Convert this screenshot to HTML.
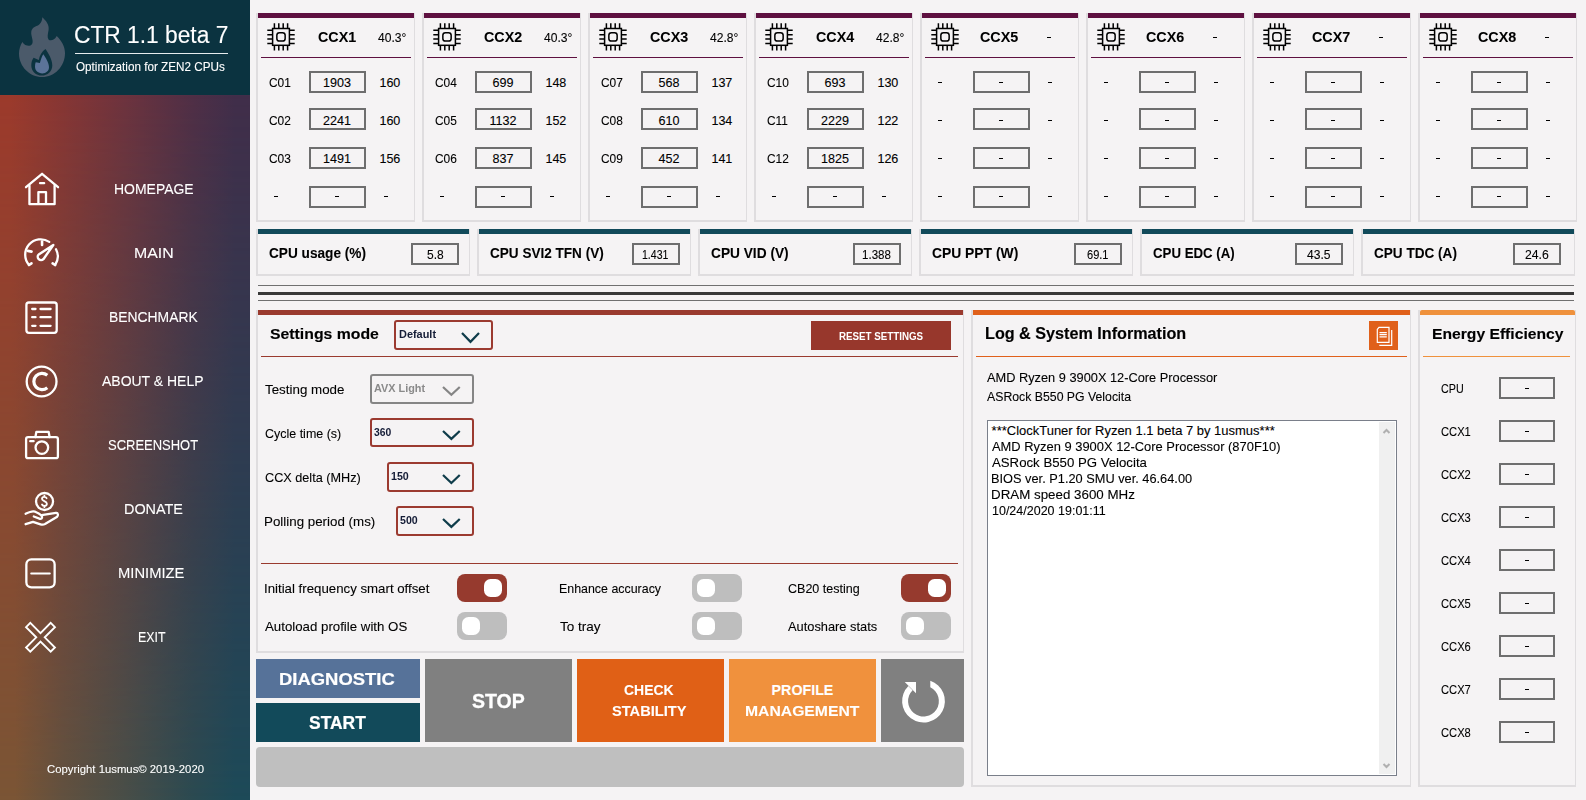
<!DOCTYPE html>
<html><head><meta charset="utf-8"><style>
html,body{margin:0;padding:0;width:1586px;height:800px;overflow:hidden;background:#f5f3f4;}
body>div,body>span,body>svg{position:absolute;box-sizing:content-box;}
span{white-space:nowrap;font-family:"Liberation Sans",sans-serif;transform-origin:0 0;}
svg{overflow:visible;}
</style></head><body>
<div style="left:0px;top:0px;width:250px;height:95px;background:#0b3340;"></div>
<div style="left:0;top:95px;width:250px;height:705px;background:linear-gradient(to right,#9c3a2c 4%,#873634 25%,#6d333e 50%,#502f46 77%,#412e4a 94%)"></div>
<div style="left:0;top:95px;width:250px;height:705px;background:linear-gradient(to right,#7a5535 6%,#61513f 25%,#484e48 50%,#2b4a51 77%,#1d4a58 94%);-webkit-mask-image:linear-gradient(to bottom,transparent,#000);mask-image:linear-gradient(to bottom,transparent,#000)"></div>
<div style="left:75px;top:52.8px;width:153px;height:1.4px;background:#e6ecee;"></div>
<svg style="left:0;top:0" width="250" height="800" viewBox="0 0 250 800">
<path fill="#4b5a6a" d="M42.2,17.3 C46,20.5 49.5,25 48.6,30 C47.9,34 47,37 48.5,39.4 C50.5,41.3 54.5,40.2 56.7,35.9 C61.5,40.5 65,46.5 65,53 C65,66.5 54.5,77.1 42.2,77.1 C29.5,77.1 19,66.5 19,53.6 C19,49.5 20.3,45.2 22.4,42 C24,45 27,46 29.4,45.8 C32,45.5 33,43 32.5,40 C32,37 30.8,34 31.3,31.5 C32,28 35,26.6 37.3,25.8 C40,24.5 42.5,21 42.2,17.3 Z"/>
<path fill="#0b3340" d="M45.5,49.1 C48,53 52.3,59 52.3,65.5 C52.3,71.3 47.5,75.6 41.8,75.6 C36,75.6 31.3,71.3 31.3,65.5 C31.3,62.5 32,60 33.6,57.8 L38.8,60 C39.5,55.5 42,51.5 45.5,49.1 Z"/>
<path fill="#5b7399" d="M43.3,54.2 C45.5,57.5 49,62.5 49,67.3 C49,70.8 46.2,73.4 42.3,73.4 C38.2,73.4 35,70.6 35,66.8 C35,65 35.2,63.5 35.7,62.2 L39.9,62.9 C40.8,59.5 41.8,56.5 43.3,54.2 Z"/>
<g stroke="#fff" fill="none" stroke-width="2.3" stroke-linecap="round" stroke-linejoin="round">
<path d="M26,187.2 L42.05,173.8 L58.06,187.2"/>
<path d="M29.45,185.6 V204.2 H54.6 V185.6"/>
<path d="M38.4,204.2 V192.1 H46 V204.2" stroke-linecap="butt"/>
<path d="M40,183.2 H44.2" stroke-width="2.2"/>
</g>
<g stroke="#fff" fill="none" stroke-width="2.3" stroke-linecap="round" stroke-linejoin="round" stroke-width="2.9">
<path d="M29,265 A15.5,15.5 0 0 1 49.25,241.9"/>
<path d="M56,249.3 A15.5,15.5 0 0 1 55.1,265"/>
<path d="M42.05,241.5 V245" stroke-width="2.6"/>
<path d="M27.8,250.9 L31.6,251.6" stroke-width="2.6"/>
<path d="M29,265 L31.5,263.3" stroke-width="2.6"/>
<path d="M55.1,265 L52.6,263.4" stroke-width="2.6"/>
<path d="M53.3,245 L43.4,259.2 A3.3,3.3 0 0 1 38.7,254.5 Z" stroke-width="2.4"/>
</g>
<g stroke="#fff" fill="none" stroke-width="2.3" stroke-linecap="round" stroke-linejoin="round" stroke-width="2.4">
<rect x="26.4" y="302.5" width="30.3" height="30.3" rx="2.5"/>
<path d="M32.2,309 H35.5 M40.5,309 H50.6 M32.2,317.2 H35.5 M40.5,317.2 H50.6 M32.2,325.8 H35.5 M40.5,325.8 H50.6"/>
</g>
<g stroke="#fff" fill="none" stroke-width="2.3" stroke-linecap="round" stroke-linejoin="round" stroke-width="3">
<circle cx="41.6" cy="381.5" r="14.9"/>
<path d="M47.3,375.2 A8.2,8.2 0 1 0 47.3,387.8" stroke-width="3.2" stroke-linecap="butt"/>
</g>
<g stroke="#fff" fill="none" stroke-width="2.3" stroke-linecap="round" stroke-linejoin="round" stroke-width="2.1">
<rect x="26.1" y="437.1" width="31.8" height="21.1" rx="2"/>
<path d="M35.4,437 L36.4,431.8 H48.6 L49.6,437"/>
<circle cx="41.85" cy="447.6" r="6.3"/>
<path d="M30.2,441.2 H33.6"/>
</g>
<g stroke="#fff" fill="none" stroke-width="2.3" stroke-linecap="round" stroke-linejoin="round" stroke-width="2">
<circle cx="44.55" cy="501.5" r="8.5"/>
<path d="M46.6,498.2 C46,497 44.8,496.9 44.2,496.9 C42.8,496.9 42,497.9 42,499 C42,501.3 46.9,501 46.9,503.7 C46.9,505 45.9,505.9 44.4,505.9 C43.3,505.9 42.4,505.3 42,504.5 M44.4,495.6 V496.9 M44.4,505.9 V507.2" stroke-width="1.8"/>
<path d="M25.6,513.8 C28,512.6 31,511.1 33.5,511.3 C36,511.5 39,513.6 41,515.1 C42.9,516.6 42.2,519.2 40,518.9 L33.8,516.5"/>
<path d="M41.6,515.2 L56,512.8 C58.2,512.6 58.6,515.6 56.8,517.1 L45,524 C43.5,524.8 42,524.8 40.5,524.3 L33,521.8 L25.6,524.2"/>
</g>
<g stroke="#fff" fill="none" stroke-width="2.3" stroke-linecap="round" stroke-linejoin="round" stroke-width="2.3">
<rect x="26.35" y="559.45" width="28.3" height="27.9" rx="5"/>
<path d="M31.2,573.4 H49.8" stroke-width="2"/>
</g>
<polygon fill="none" stroke="#fff" stroke-width="1.9" stroke-linejoin="miter" points="30.32,622.93 40.50,633.11 50.68,622.93 54.92,627.17 44.74,637.35 54.92,647.53 50.68,651.77 40.50,641.59 30.32,651.77 26.08,647.53 36.26,637.35 26.08,627.17"/>
</svg>
<div style="left:256px;top:13px;width:156px;height:207px;border-left:2px solid #dfdddf;border-right:1px solid #dfdddf;border-bottom:2px solid #dfdddf"></div>
<div style="left:258px;top:13px;width:156px;height:5px;background:#5e1040;"></div>
<div style="left:261px;top:57px;width:150px;height:1px;background:#5e1040;"></div>
<svg style="left:267px;top:23px" width="28" height="28" viewBox="0 0 28 28"><g fill="none" stroke="#000" stroke-width="1.5">
<rect x="5.6" y="5.5" width="16.8" height="16.8"/><rect x="9.85" y="9.75" width="8.3" height="8.3" rx="2.6"/>
<path d="M11.8,0.3V5.5M16.2,0.3V5.5M7.4,0.3V5.5M20.6,0.3V5.5 M11.8,22.3V27.6M16.2,22.3V27.6M7.4,22.3V27.6M20.6,22.3V27.6 M0.3,11.7H5.6M0.3,16.1H5.6M0.3,7.3H5.6M0.3,20.5H5.6 M22.4,11.7H27.7M22.4,16.1H27.7M22.4,7.3H27.7M22.4,20.5H27.7"/></g></svg>
<div style="left:309px;top:71px;width:53px;height:18px;border:2px solid #6e6e6e;background:transparent;border-radius:0px;"></div>
<div style="left:309px;top:108px;width:53px;height:18px;border:2px solid #6e6e6e;background:transparent;border-radius:0px;"></div>
<div style="left:309px;top:147px;width:53px;height:18px;border:2px solid #6e6e6e;background:transparent;border-radius:0px;"></div>
<div style="left:309px;top:186px;width:53px;height:18px;border:2px solid #6e6e6e;background:transparent;border-radius:0px;"></div>
<div style="left:274px;top:196px;width:4px;height:1px;background:#000;"></div>
<div style="left:335px;top:196px;width:4px;height:1px;background:#000;"></div>
<div style="left:384px;top:196px;width:4px;height:1px;background:#000;"></div>
<div style="left:422px;top:13px;width:156px;height:207px;border-left:2px solid #dfdddf;border-right:1px solid #dfdddf;border-bottom:2px solid #dfdddf"></div>
<div style="left:424px;top:13px;width:156px;height:5px;background:#5e1040;"></div>
<div style="left:427px;top:57px;width:150px;height:1px;background:#5e1040;"></div>
<svg style="left:433px;top:23px" width="28" height="28" viewBox="0 0 28 28"><g fill="none" stroke="#000" stroke-width="1.5">
<rect x="5.6" y="5.5" width="16.8" height="16.8"/><rect x="9.85" y="9.75" width="8.3" height="8.3" rx="2.6"/>
<path d="M11.8,0.3V5.5M16.2,0.3V5.5M7.4,0.3V5.5M20.6,0.3V5.5 M11.8,22.3V27.6M16.2,22.3V27.6M7.4,22.3V27.6M20.6,22.3V27.6 M0.3,11.7H5.6M0.3,16.1H5.6M0.3,7.3H5.6M0.3,20.5H5.6 M22.4,11.7H27.7M22.4,16.1H27.7M22.4,7.3H27.7M22.4,20.5H27.7"/></g></svg>
<div style="left:475px;top:71px;width:53px;height:18px;border:2px solid #6e6e6e;background:transparent;border-radius:0px;"></div>
<div style="left:475px;top:108px;width:53px;height:18px;border:2px solid #6e6e6e;background:transparent;border-radius:0px;"></div>
<div style="left:475px;top:147px;width:53px;height:18px;border:2px solid #6e6e6e;background:transparent;border-radius:0px;"></div>
<div style="left:475px;top:186px;width:53px;height:18px;border:2px solid #6e6e6e;background:transparent;border-radius:0px;"></div>
<div style="left:440px;top:196px;width:4px;height:1px;background:#000;"></div>
<div style="left:501px;top:196px;width:4px;height:1px;background:#000;"></div>
<div style="left:550px;top:196px;width:4px;height:1px;background:#000;"></div>
<div style="left:588px;top:13px;width:156px;height:207px;border-left:2px solid #dfdddf;border-right:1px solid #dfdddf;border-bottom:2px solid #dfdddf"></div>
<div style="left:590px;top:13px;width:156px;height:5px;background:#5e1040;"></div>
<div style="left:593px;top:57px;width:150px;height:1px;background:#5e1040;"></div>
<svg style="left:599px;top:23px" width="28" height="28" viewBox="0 0 28 28"><g fill="none" stroke="#000" stroke-width="1.5">
<rect x="5.6" y="5.5" width="16.8" height="16.8"/><rect x="9.85" y="9.75" width="8.3" height="8.3" rx="2.6"/>
<path d="M11.8,0.3V5.5M16.2,0.3V5.5M7.4,0.3V5.5M20.6,0.3V5.5 M11.8,22.3V27.6M16.2,22.3V27.6M7.4,22.3V27.6M20.6,22.3V27.6 M0.3,11.7H5.6M0.3,16.1H5.6M0.3,7.3H5.6M0.3,20.5H5.6 M22.4,11.7H27.7M22.4,16.1H27.7M22.4,7.3H27.7M22.4,20.5H27.7"/></g></svg>
<div style="left:641px;top:71px;width:53px;height:18px;border:2px solid #6e6e6e;background:transparent;border-radius:0px;"></div>
<div style="left:641px;top:108px;width:53px;height:18px;border:2px solid #6e6e6e;background:transparent;border-radius:0px;"></div>
<div style="left:641px;top:147px;width:53px;height:18px;border:2px solid #6e6e6e;background:transparent;border-radius:0px;"></div>
<div style="left:641px;top:186px;width:53px;height:18px;border:2px solid #6e6e6e;background:transparent;border-radius:0px;"></div>
<div style="left:606px;top:196px;width:4px;height:1px;background:#000;"></div>
<div style="left:667px;top:196px;width:4px;height:1px;background:#000;"></div>
<div style="left:716px;top:196px;width:4px;height:1px;background:#000;"></div>
<div style="left:754px;top:13px;width:156px;height:207px;border-left:2px solid #dfdddf;border-right:1px solid #dfdddf;border-bottom:2px solid #dfdddf"></div>
<div style="left:756px;top:13px;width:156px;height:5px;background:#5e1040;"></div>
<div style="left:759px;top:57px;width:150px;height:1px;background:#5e1040;"></div>
<svg style="left:765px;top:23px" width="28" height="28" viewBox="0 0 28 28"><g fill="none" stroke="#000" stroke-width="1.5">
<rect x="5.6" y="5.5" width="16.8" height="16.8"/><rect x="9.85" y="9.75" width="8.3" height="8.3" rx="2.6"/>
<path d="M11.8,0.3V5.5M16.2,0.3V5.5M7.4,0.3V5.5M20.6,0.3V5.5 M11.8,22.3V27.6M16.2,22.3V27.6M7.4,22.3V27.6M20.6,22.3V27.6 M0.3,11.7H5.6M0.3,16.1H5.6M0.3,7.3H5.6M0.3,20.5H5.6 M22.4,11.7H27.7M22.4,16.1H27.7M22.4,7.3H27.7M22.4,20.5H27.7"/></g></svg>
<div style="left:807px;top:71px;width:53px;height:18px;border:2px solid #6e6e6e;background:transparent;border-radius:0px;"></div>
<div style="left:807px;top:108px;width:53px;height:18px;border:2px solid #6e6e6e;background:transparent;border-radius:0px;"></div>
<div style="left:807px;top:147px;width:53px;height:18px;border:2px solid #6e6e6e;background:transparent;border-radius:0px;"></div>
<div style="left:807px;top:186px;width:53px;height:18px;border:2px solid #6e6e6e;background:transparent;border-radius:0px;"></div>
<div style="left:772px;top:196px;width:4px;height:1px;background:#000;"></div>
<div style="left:833px;top:196px;width:4px;height:1px;background:#000;"></div>
<div style="left:882px;top:196px;width:4px;height:1px;background:#000;"></div>
<div style="left:920px;top:13px;width:156px;height:207px;border-left:2px solid #dfdddf;border-right:1px solid #dfdddf;border-bottom:2px solid #dfdddf"></div>
<div style="left:922px;top:13px;width:156px;height:5px;background:#5e1040;"></div>
<div style="left:925px;top:57px;width:150px;height:1px;background:#5e1040;"></div>
<svg style="left:931px;top:23px" width="28" height="28" viewBox="0 0 28 28"><g fill="none" stroke="#000" stroke-width="1.5">
<rect x="5.6" y="5.5" width="16.8" height="16.8"/><rect x="9.85" y="9.75" width="8.3" height="8.3" rx="2.6"/>
<path d="M11.8,0.3V5.5M16.2,0.3V5.5M7.4,0.3V5.5M20.6,0.3V5.5 M11.8,22.3V27.6M16.2,22.3V27.6M7.4,22.3V27.6M20.6,22.3V27.6 M0.3,11.7H5.6M0.3,16.1H5.6M0.3,7.3H5.6M0.3,20.5H5.6 M22.4,11.7H27.7M22.4,16.1H27.7M22.4,7.3H27.7M22.4,20.5H27.7"/></g></svg>
<div style="left:1047px;top:37px;width:4px;height:1px;background:#000;"></div>
<div style="left:973px;top:71px;width:53px;height:18px;border:2px solid #6e6e6e;background:transparent;border-radius:0px;"></div>
<div style="left:938px;top:82px;width:4px;height:1px;background:#000;"></div>
<div style="left:999px;top:82px;width:4px;height:1px;background:#000;"></div>
<div style="left:1048px;top:82px;width:4px;height:1px;background:#000;"></div>
<div style="left:973px;top:108px;width:53px;height:18px;border:2px solid #6e6e6e;background:transparent;border-radius:0px;"></div>
<div style="left:938px;top:120px;width:4px;height:1px;background:#000;"></div>
<div style="left:999px;top:120px;width:4px;height:1px;background:#000;"></div>
<div style="left:1048px;top:120px;width:4px;height:1px;background:#000;"></div>
<div style="left:973px;top:147px;width:53px;height:18px;border:2px solid #6e6e6e;background:transparent;border-radius:0px;"></div>
<div style="left:938px;top:158px;width:4px;height:1px;background:#000;"></div>
<div style="left:999px;top:158px;width:4px;height:1px;background:#000;"></div>
<div style="left:1048px;top:158px;width:4px;height:1px;background:#000;"></div>
<div style="left:973px;top:186px;width:53px;height:18px;border:2px solid #6e6e6e;background:transparent;border-radius:0px;"></div>
<div style="left:938px;top:196px;width:4px;height:1px;background:#000;"></div>
<div style="left:999px;top:196px;width:4px;height:1px;background:#000;"></div>
<div style="left:1048px;top:196px;width:4px;height:1px;background:#000;"></div>
<div style="left:1086px;top:13px;width:156px;height:207px;border-left:2px solid #dfdddf;border-right:1px solid #dfdddf;border-bottom:2px solid #dfdddf"></div>
<div style="left:1088px;top:13px;width:156px;height:5px;background:#5e1040;"></div>
<div style="left:1091px;top:57px;width:150px;height:1px;background:#5e1040;"></div>
<svg style="left:1097px;top:23px" width="28" height="28" viewBox="0 0 28 28"><g fill="none" stroke="#000" stroke-width="1.5">
<rect x="5.6" y="5.5" width="16.8" height="16.8"/><rect x="9.85" y="9.75" width="8.3" height="8.3" rx="2.6"/>
<path d="M11.8,0.3V5.5M16.2,0.3V5.5M7.4,0.3V5.5M20.6,0.3V5.5 M11.8,22.3V27.6M16.2,22.3V27.6M7.4,22.3V27.6M20.6,22.3V27.6 M0.3,11.7H5.6M0.3,16.1H5.6M0.3,7.3H5.6M0.3,20.5H5.6 M22.4,11.7H27.7M22.4,16.1H27.7M22.4,7.3H27.7M22.4,20.5H27.7"/></g></svg>
<div style="left:1213px;top:37px;width:4px;height:1px;background:#000;"></div>
<div style="left:1139px;top:71px;width:53px;height:18px;border:2px solid #6e6e6e;background:transparent;border-radius:0px;"></div>
<div style="left:1104px;top:82px;width:4px;height:1px;background:#000;"></div>
<div style="left:1165px;top:82px;width:4px;height:1px;background:#000;"></div>
<div style="left:1214px;top:82px;width:4px;height:1px;background:#000;"></div>
<div style="left:1139px;top:108px;width:53px;height:18px;border:2px solid #6e6e6e;background:transparent;border-radius:0px;"></div>
<div style="left:1104px;top:120px;width:4px;height:1px;background:#000;"></div>
<div style="left:1165px;top:120px;width:4px;height:1px;background:#000;"></div>
<div style="left:1214px;top:120px;width:4px;height:1px;background:#000;"></div>
<div style="left:1139px;top:147px;width:53px;height:18px;border:2px solid #6e6e6e;background:transparent;border-radius:0px;"></div>
<div style="left:1104px;top:158px;width:4px;height:1px;background:#000;"></div>
<div style="left:1165px;top:158px;width:4px;height:1px;background:#000;"></div>
<div style="left:1214px;top:158px;width:4px;height:1px;background:#000;"></div>
<div style="left:1139px;top:186px;width:53px;height:18px;border:2px solid #6e6e6e;background:transparent;border-radius:0px;"></div>
<div style="left:1104px;top:196px;width:4px;height:1px;background:#000;"></div>
<div style="left:1165px;top:196px;width:4px;height:1px;background:#000;"></div>
<div style="left:1214px;top:196px;width:4px;height:1px;background:#000;"></div>
<div style="left:1252px;top:13px;width:156px;height:207px;border-left:2px solid #dfdddf;border-right:1px solid #dfdddf;border-bottom:2px solid #dfdddf"></div>
<div style="left:1254px;top:13px;width:156px;height:5px;background:#5e1040;"></div>
<div style="left:1257px;top:57px;width:150px;height:1px;background:#5e1040;"></div>
<svg style="left:1263px;top:23px" width="28" height="28" viewBox="0 0 28 28"><g fill="none" stroke="#000" stroke-width="1.5">
<rect x="5.6" y="5.5" width="16.8" height="16.8"/><rect x="9.85" y="9.75" width="8.3" height="8.3" rx="2.6"/>
<path d="M11.8,0.3V5.5M16.2,0.3V5.5M7.4,0.3V5.5M20.6,0.3V5.5 M11.8,22.3V27.6M16.2,22.3V27.6M7.4,22.3V27.6M20.6,22.3V27.6 M0.3,11.7H5.6M0.3,16.1H5.6M0.3,7.3H5.6M0.3,20.5H5.6 M22.4,11.7H27.7M22.4,16.1H27.7M22.4,7.3H27.7M22.4,20.5H27.7"/></g></svg>
<div style="left:1379px;top:37px;width:4px;height:1px;background:#000;"></div>
<div style="left:1305px;top:71px;width:53px;height:18px;border:2px solid #6e6e6e;background:transparent;border-radius:0px;"></div>
<div style="left:1270px;top:82px;width:4px;height:1px;background:#000;"></div>
<div style="left:1331px;top:82px;width:4px;height:1px;background:#000;"></div>
<div style="left:1380px;top:82px;width:4px;height:1px;background:#000;"></div>
<div style="left:1305px;top:108px;width:53px;height:18px;border:2px solid #6e6e6e;background:transparent;border-radius:0px;"></div>
<div style="left:1270px;top:120px;width:4px;height:1px;background:#000;"></div>
<div style="left:1331px;top:120px;width:4px;height:1px;background:#000;"></div>
<div style="left:1380px;top:120px;width:4px;height:1px;background:#000;"></div>
<div style="left:1305px;top:147px;width:53px;height:18px;border:2px solid #6e6e6e;background:transparent;border-radius:0px;"></div>
<div style="left:1270px;top:158px;width:4px;height:1px;background:#000;"></div>
<div style="left:1331px;top:158px;width:4px;height:1px;background:#000;"></div>
<div style="left:1380px;top:158px;width:4px;height:1px;background:#000;"></div>
<div style="left:1305px;top:186px;width:53px;height:18px;border:2px solid #6e6e6e;background:transparent;border-radius:0px;"></div>
<div style="left:1270px;top:196px;width:4px;height:1px;background:#000;"></div>
<div style="left:1331px;top:196px;width:4px;height:1px;background:#000;"></div>
<div style="left:1380px;top:196px;width:4px;height:1px;background:#000;"></div>
<div style="left:1418px;top:13px;width:156px;height:207px;border-left:2px solid #dfdddf;border-right:1px solid #dfdddf;border-bottom:2px solid #dfdddf"></div>
<div style="left:1420px;top:13px;width:156px;height:5px;background:#5e1040;"></div>
<div style="left:1423px;top:57px;width:150px;height:1px;background:#5e1040;"></div>
<svg style="left:1429px;top:23px" width="28" height="28" viewBox="0 0 28 28"><g fill="none" stroke="#000" stroke-width="1.5">
<rect x="5.6" y="5.5" width="16.8" height="16.8"/><rect x="9.85" y="9.75" width="8.3" height="8.3" rx="2.6"/>
<path d="M11.8,0.3V5.5M16.2,0.3V5.5M7.4,0.3V5.5M20.6,0.3V5.5 M11.8,22.3V27.6M16.2,22.3V27.6M7.4,22.3V27.6M20.6,22.3V27.6 M0.3,11.7H5.6M0.3,16.1H5.6M0.3,7.3H5.6M0.3,20.5H5.6 M22.4,11.7H27.7M22.4,16.1H27.7M22.4,7.3H27.7M22.4,20.5H27.7"/></g></svg>
<div style="left:1545px;top:37px;width:4px;height:1px;background:#000;"></div>
<div style="left:1471px;top:71px;width:53px;height:18px;border:2px solid #6e6e6e;background:transparent;border-radius:0px;"></div>
<div style="left:1436px;top:82px;width:4px;height:1px;background:#000;"></div>
<div style="left:1497px;top:82px;width:4px;height:1px;background:#000;"></div>
<div style="left:1546px;top:82px;width:4px;height:1px;background:#000;"></div>
<div style="left:1471px;top:108px;width:53px;height:18px;border:2px solid #6e6e6e;background:transparent;border-radius:0px;"></div>
<div style="left:1436px;top:120px;width:4px;height:1px;background:#000;"></div>
<div style="left:1497px;top:120px;width:4px;height:1px;background:#000;"></div>
<div style="left:1546px;top:120px;width:4px;height:1px;background:#000;"></div>
<div style="left:1471px;top:147px;width:53px;height:18px;border:2px solid #6e6e6e;background:transparent;border-radius:0px;"></div>
<div style="left:1436px;top:158px;width:4px;height:1px;background:#000;"></div>
<div style="left:1497px;top:158px;width:4px;height:1px;background:#000;"></div>
<div style="left:1546px;top:158px;width:4px;height:1px;background:#000;"></div>
<div style="left:1471px;top:186px;width:53px;height:18px;border:2px solid #6e6e6e;background:transparent;border-radius:0px;"></div>
<div style="left:1436px;top:196px;width:4px;height:1px;background:#000;"></div>
<div style="left:1497px;top:196px;width:4px;height:1px;background:#000;"></div>
<div style="left:1546px;top:196px;width:4px;height:1px;background:#000;"></div>
<div style="left:256px;top:229px;width:211px;height:45px;border-left:2px solid #dfdddf;border-right:1px solid #dfdddf;border-bottom:2px solid #dfdddf"></div>
<div style="left:258px;top:229px;width:211px;height:5px;background:#114a5a;"></div>
<div style="left:411px;top:243px;width:44px;height:18px;border:2px solid #6e6e6e;background:transparent;border-radius:0px;"></div>
<div style="left:477px;top:229px;width:211px;height:45px;border-left:2px solid #dfdddf;border-right:1px solid #dfdddf;border-bottom:2px solid #dfdddf"></div>
<div style="left:479px;top:229px;width:211px;height:5px;background:#114a5a;"></div>
<div style="left:632px;top:243px;width:44px;height:18px;border:2px solid #6e6e6e;background:transparent;border-radius:0px;"></div>
<div style="left:698px;top:229px;width:211px;height:45px;border-left:2px solid #dfdddf;border-right:1px solid #dfdddf;border-bottom:2px solid #dfdddf"></div>
<div style="left:700px;top:229px;width:211px;height:5px;background:#114a5a;"></div>
<div style="left:853px;top:243px;width:44px;height:18px;border:2px solid #6e6e6e;background:transparent;border-radius:0px;"></div>
<div style="left:919px;top:229px;width:211px;height:45px;border-left:2px solid #dfdddf;border-right:1px solid #dfdddf;border-bottom:2px solid #dfdddf"></div>
<div style="left:921px;top:229px;width:211px;height:5px;background:#114a5a;"></div>
<div style="left:1074px;top:243px;width:44px;height:18px;border:2px solid #6e6e6e;background:transparent;border-radius:0px;"></div>
<div style="left:1140px;top:229px;width:211px;height:45px;border-left:2px solid #dfdddf;border-right:1px solid #dfdddf;border-bottom:2px solid #dfdddf"></div>
<div style="left:1142px;top:229px;width:211px;height:5px;background:#114a5a;"></div>
<div style="left:1295px;top:243px;width:44px;height:18px;border:2px solid #6e6e6e;background:transparent;border-radius:0px;"></div>
<div style="left:1361px;top:229px;width:211px;height:45px;border-left:2px solid #dfdddf;border-right:1px solid #dfdddf;border-bottom:2px solid #dfdddf"></div>
<div style="left:1363px;top:229px;width:211px;height:5px;background:#114a5a;"></div>
<div style="left:1513px;top:243px;width:44px;height:18px;border:2px solid #6e6e6e;background:transparent;border-radius:0px;"></div>
<div style="left:258px;top:285px;width:1316px;height:1px;background:#707070;"></div>
<div style="left:258px;top:292px;width:1316px;height:3px;background:#383838;"></div>
<div style="left:258px;top:300px;width:1316px;height:1px;background:#707070;"></div>
<div style="left:256px;top:310px;width:705px;height:341px;border-left:2px solid #dfdddf;border-right:1px solid #dfdddf;border-bottom:2px solid #dfdddf"></div>
<div style="left:258px;top:310px;width:705px;height:5px;background:#9a3a2e;"></div>
<div style="left:394px;top:320px;width:95px;height:26px;border:2px solid #9b3a30;background:transparent;border-radius:3px;"></div>
<svg style="left:460px;top:330.5px" width="21" height="13.5"><path d="M2,2 L10.5,10.8 L19,2" fill="none" stroke="#0f3c4a" stroke-width="2.2"/></svg>
<div style="left:811px;top:321px;width:140px;height:28.6px;background:#97372c;"></div>
<div style="left:261px;top:356px;width:697px;height:1px;background:#9a3a2e;"></div>
<div style="left:370px;top:374px;width:100px;height:26px;border:2px solid #858585;background:transparent;border-radius:3px;"></div>
<svg style="left:441px;top:384.8px" width="20.75" height="12.399999999999977"><path d="M2,2 L10.375,9.699999999999978 L18.75,2" fill="none" stroke="#858585" stroke-width="2.2"/></svg>
<div style="left:370px;top:418px;width:100px;height:25px;border:2px solid #9b3a30;background:transparent;border-radius:3px;"></div>
<svg style="left:441px;top:428.8px" width="20.75" height="12.599999999999966"><path d="M2,2 L10.375,9.899999999999967 L18.75,2" fill="none" stroke="#0f3c4a" stroke-width="2.2"/></svg>
<div style="left:387px;top:462px;width:83px;height:26px;border:2px solid #9b3a30;background:transparent;border-radius:3px;"></div>
<svg style="left:441px;top:472.5px" width="20.75" height="12.699999999999989"><path d="M2,2 L10.375,9.99999999999999 L18.75,2" fill="none" stroke="#0f3c4a" stroke-width="2.2"/></svg>
<div style="left:396px;top:506px;width:74px;height:26px;border:2px solid #9b3a30;background:transparent;border-radius:3px;"></div>
<svg style="left:441px;top:516.6px" width="20.75" height="12.600000000000023"><path d="M2,2 L10.375,9.900000000000023 L18.75,2" fill="none" stroke="#0f3c4a" stroke-width="2.2"/></svg>
<div style="left:261px;top:563px;width:697px;height:1px;background:#9a3a2e;"></div>
<div style="left:457px;top:574px;width:50px;height:28px;border-radius:8px;background:#963a2e"></div>
<div style="left:484px;top:578.9px;width:18.4px;height:18.1px;border-radius:6.5px;background:#fff"></div>
<div style="left:692.2px;top:574px;width:50px;height:28px;border-radius:8px;background:#bebebe"></div>
<div style="left:696.8000000000001px;top:578.9px;width:18.4px;height:18.1px;border-radius:6.5px;background:#fff"></div>
<div style="left:901px;top:574px;width:50px;height:28px;border-radius:8px;background:#963a2e"></div>
<div style="left:928px;top:578.9px;width:18.4px;height:18.1px;border-radius:6.5px;background:#fff"></div>
<div style="left:457px;top:612px;width:50px;height:28px;border-radius:8px;background:#bebebe"></div>
<div style="left:461.6px;top:616.9px;width:18.4px;height:18.1px;border-radius:6.5px;background:#fff"></div>
<div style="left:692.2px;top:612px;width:50px;height:28px;border-radius:8px;background:#bebebe"></div>
<div style="left:696.8000000000001px;top:616.9px;width:18.4px;height:18.1px;border-radius:6.5px;background:#fff"></div>
<div style="left:901px;top:612px;width:50px;height:28px;border-radius:8px;background:#bebebe"></div>
<div style="left:905.6px;top:616.9px;width:18.4px;height:18.1px;border-radius:6.5px;background:#fff"></div>
<div style="left:256px;top:659px;width:164px;height:38.5px;background:#567299;"></div>
<div style="left:256px;top:703px;width:164px;height:38.8px;background:#124a5a;"></div>
<div style="left:425px;top:659px;width:147px;height:83px;background:#808080;"></div>
<div style="left:577px;top:659px;width:147px;height:83px;background:#e06016;"></div>
<div style="left:729px;top:659px;width:147px;height:83px;background:#f0913d;"></div>
<div style="left:881px;top:659px;width:83px;height:83px;background:#808080;"></div>
<svg style="left:881px;top:659px" width="83" height="83"><g transform="translate(-881,-659)">
<path d="M930.3,680.8 A21.4,21.4 0 1 1 908.37,685.97 L912.6,690.2 A15.4,15.4 0 1 0 930.3,687.3 Z" fill="#fff"/>
<polygon points="904.75,682 916,682 916,693.25" fill="#fff"/></g></svg>
<div style="left:256px;top:747px;width:708px;height:40px;background:#bfbfbf;border-radius:4px"></div>
<div style="left:971px;top:310px;width:437px;height:475px;border-left:2px solid #dfdddf;border-right:1px solid #dfdddf;border-bottom:2px solid #dfdddf"></div>
<div style="left:973px;top:310px;width:437px;height:5px;background:#e0601a;"></div>
<div style="left:1369px;top:321px;width:29px;height:29px;background:#e0601a;"></div>
<svg style="left:1369px;top:321px" width="29" height="29"><g transform="translate(-1369,-321)" fill="none" stroke="#fff" stroke-width="1.2">
<path d="M1379.3,345.3 H1391.7 V330"/>
<path d="M1377.3,329.3 L1379,327.3 H1389 V342.4 H1377.3 Z" fill="#e0601a"/>
<path d="M1379.5,332.6 H1386.8 M1379.5,334.7 H1386.8 M1379.5,336.9 H1386.8"/></g></svg>
<div style="left:976px;top:356px;width:431px;height:1.2px;background:#e0601a;"></div>
<div style="left:987px;top:420px;width:407.5px;height:353.5px;border:1px solid #7a7f8a;background:#fff"></div>
<div style="left:1379px;top:422px;width:16px;height:352px;background:#f0f0f0;"></div>
<svg style="left:1379px;top:422px" width="16" height="352"><path d="M4.5,11 L7.5,8 L10.5,11 M4.5,342 L7.5,345 L10.5,342" fill="none" stroke="#b0b0b0" stroke-width="2"/></svg>
<div style="left:1418px;top:310px;width:155px;height:475px;border-left:2px solid #dfdddf;border-right:1px solid #dfdddf;border-bottom:2px solid #dfdddf"></div>
<div style="left:1420px;top:310px;width:155px;height:5px;background:#ef913c;border-radius:2px 2px 0 0"></div>
<div style="left:1423px;top:356px;width:147px;height:1.2px;background:#ef913c;"></div>
<div style="left:1499px;top:377px;width:52px;height:18px;border:2px solid #6e6e6e;background:transparent;border-radius:0px;"></div>
<div style="left:1525px;top:388px;width:4px;height:1px;background:#000;"></div>
<div style="left:1499px;top:420px;width:52px;height:18px;border:2px solid #6e6e6e;background:transparent;border-radius:0px;"></div>
<div style="left:1525px;top:431px;width:4px;height:1px;background:#000;"></div>
<div style="left:1499px;top:463px;width:52px;height:18px;border:2px solid #6e6e6e;background:transparent;border-radius:0px;"></div>
<div style="left:1525px;top:474px;width:4px;height:1px;background:#000;"></div>
<div style="left:1499px;top:506px;width:52px;height:18px;border:2px solid #6e6e6e;background:transparent;border-radius:0px;"></div>
<div style="left:1525px;top:517px;width:4px;height:1px;background:#000;"></div>
<div style="left:1499px;top:549px;width:52px;height:18px;border:2px solid #6e6e6e;background:transparent;border-radius:0px;"></div>
<div style="left:1525px;top:560px;width:4px;height:1px;background:#000;"></div>
<div style="left:1499px;top:592px;width:52px;height:18px;border:2px solid #6e6e6e;background:transparent;border-radius:0px;"></div>
<div style="left:1525px;top:603px;width:4px;height:1px;background:#000;"></div>
<div style="left:1499px;top:635px;width:52px;height:18px;border:2px solid #6e6e6e;background:transparent;border-radius:0px;"></div>
<div style="left:1525px;top:646px;width:4px;height:1px;background:#000;"></div>
<div style="left:1499px;top:678px;width:52px;height:18px;border:2px solid #6e6e6e;background:transparent;border-radius:0px;"></div>
<div style="left:1525px;top:689px;width:4px;height:1px;background:#000;"></div>
<div style="left:1499px;top:721px;width:52px;height:18px;border:2px solid #6e6e6e;background:transparent;border-radius:0px;"></div>
<div style="left:1525px;top:732px;width:4px;height:1px;background:#000;"></div>
<span style="left:74.04px;top:24.00px;font-size:23.74px;line-height:23.74px;color:#fff;-webkit-text-stroke:0.1px #fff;transform:scaleX(0.9587);">CTR 1.1 beta 7</span>
<span style="left:75.50px;top:61.00px;font-size:12.57px;line-height:12.57px;color:#fff;-webkit-text-stroke:0.1px #fff;transform:scaleX(0.9305);">Optimization for ZEN2 CPUs</span>
<span style="left:113.59px;top:181.00px;font-size:15.36px;line-height:15.36px;color:#fff;-webkit-text-stroke:0.1px #fff;transform:scaleX(0.9088);">HOMEPAGE</span>
<span style="left:133.97px;top:245.00px;font-size:15.36px;line-height:15.36px;color:#fff;-webkit-text-stroke:0.1px #fff;transform:scaleX(1.0329);">MAIN</span>
<span style="left:108.60px;top:309.00px;font-size:15.36px;line-height:15.36px;color:#fff;-webkit-text-stroke:0.1px #fff;transform:scaleX(0.9040);">BENCHMARK</span>
<span style="left:102.25px;top:373.00px;font-size:15.36px;line-height:15.36px;color:#fff;-webkit-text-stroke:0.1px #fff;transform:scaleX(0.9098);">ABOUT &amp; HELP</span>
<span style="left:108.10px;top:437.00px;font-size:15.36px;line-height:15.36px;color:#fff;-webkit-text-stroke:0.1px #fff;transform:scaleX(0.8449);">SCREENSHOT</span>
<span style="left:123.76px;top:501.00px;font-size:15.36px;line-height:15.36px;color:#fff;-webkit-text-stroke:0.1px #fff;transform:scaleX(0.9380);">DONATE</span>
<span style="left:118.44px;top:565.00px;font-size:15.36px;line-height:15.36px;color:#fff;-webkit-text-stroke:0.1px #fff;transform:scaleX(0.9607);">MINIMIZE</span>
<span style="left:138.19px;top:629.00px;font-size:15.36px;line-height:15.36px;color:#fff;-webkit-text-stroke:0.1px #fff;transform:scaleX(0.8058);">EXIT</span>
<span style="left:46.60px;top:764.00px;font-size:11.17px;line-height:11.17px;color:#fff;-webkit-text-stroke:0.1px #fff;transform:scaleX(1.0157);">Copyright 1usmus© 2019-2020</span>
<span style="left:318.20px;top:31.00px;font-size:13.97px;line-height:13.97px;color:#000;font-weight:bold;-webkit-text-stroke:0.07880000000000002px #000;transform:scaleX(1.0242);">CCX1</span>
<span style="left:378.00px;top:32.00px;font-size:12.57px;line-height:12.57px;color:#000;-webkit-text-stroke:0.1px #000;transform:scaleX(0.9609);">40.3°</span>
<span style="left:269.40px;top:77.00px;font-size:12.57px;line-height:12.57px;color:#000;-webkit-text-stroke:0.1px #000;transform:scaleX(0.9492);">C01</span>
<span style="left:323.03px;top:77.00px;font-size:12.57px;line-height:12.57px;color:#000;-webkit-text-stroke:0.1px #000;">1903</span>
<span style="left:379.40px;top:77.00px;font-size:12.57px;line-height:12.57px;color:#000;-webkit-text-stroke:0.1px #000;">160</span>
<span style="left:269.40px;top:115.00px;font-size:12.57px;line-height:12.57px;color:#000;-webkit-text-stroke:0.1px #000;transform:scaleX(0.9492);">C02</span>
<span style="left:323.03px;top:115.00px;font-size:12.57px;line-height:12.57px;color:#000;-webkit-text-stroke:0.1px #000;">2241</span>
<span style="left:379.40px;top:115.00px;font-size:12.57px;line-height:12.57px;color:#000;-webkit-text-stroke:0.1px #000;">160</span>
<span style="left:269.40px;top:153.00px;font-size:12.57px;line-height:12.57px;color:#000;-webkit-text-stroke:0.1px #000;transform:scaleX(0.9492);">C03</span>
<span style="left:323.03px;top:153.00px;font-size:12.57px;line-height:12.57px;color:#000;-webkit-text-stroke:0.1px #000;">1491</span>
<span style="left:379.40px;top:153.00px;font-size:12.57px;line-height:12.57px;color:#000;-webkit-text-stroke:0.1px #000;">156</span>
<span style="left:484.20px;top:31.00px;font-size:13.97px;line-height:13.97px;color:#000;font-weight:bold;-webkit-text-stroke:0.07880000000000002px #000;transform:scaleX(1.0242);">CCX2</span>
<span style="left:544.00px;top:32.00px;font-size:12.57px;line-height:12.57px;color:#000;-webkit-text-stroke:0.1px #000;transform:scaleX(0.9609);">40.3°</span>
<span style="left:435.40px;top:77.00px;font-size:12.57px;line-height:12.57px;color:#000;-webkit-text-stroke:0.1px #000;transform:scaleX(0.9492);">C04</span>
<span style="left:492.52px;top:77.00px;font-size:12.57px;line-height:12.57px;color:#000;-webkit-text-stroke:0.1px #000;">699</span>
<span style="left:545.40px;top:77.00px;font-size:12.57px;line-height:12.57px;color:#000;-webkit-text-stroke:0.1px #000;">148</span>
<span style="left:435.40px;top:115.00px;font-size:12.57px;line-height:12.57px;color:#000;-webkit-text-stroke:0.1px #000;transform:scaleX(0.9492);">C05</span>
<span style="left:489.50px;top:115.00px;font-size:12.57px;line-height:12.57px;color:#000;-webkit-text-stroke:0.1px #000;">1132</span>
<span style="left:545.40px;top:115.00px;font-size:12.57px;line-height:12.57px;color:#000;-webkit-text-stroke:0.1px #000;">152</span>
<span style="left:435.40px;top:153.00px;font-size:12.57px;line-height:12.57px;color:#000;-webkit-text-stroke:0.1px #000;transform:scaleX(0.9492);">C06</span>
<span style="left:492.52px;top:153.00px;font-size:12.57px;line-height:12.57px;color:#000;-webkit-text-stroke:0.1px #000;">837</span>
<span style="left:545.40px;top:153.00px;font-size:12.57px;line-height:12.57px;color:#000;-webkit-text-stroke:0.1px #000;">145</span>
<span style="left:650.20px;top:31.00px;font-size:13.97px;line-height:13.97px;color:#000;font-weight:bold;-webkit-text-stroke:0.07880000000000002px #000;transform:scaleX(1.0242);">CCX3</span>
<span style="left:710.00px;top:32.00px;font-size:12.57px;line-height:12.57px;color:#000;-webkit-text-stroke:0.1px #000;transform:scaleX(0.9609);">42.8°</span>
<span style="left:601.40px;top:77.00px;font-size:12.57px;line-height:12.57px;color:#000;-webkit-text-stroke:0.1px #000;transform:scaleX(0.9492);">C07</span>
<span style="left:658.52px;top:77.00px;font-size:12.57px;line-height:12.57px;color:#000;-webkit-text-stroke:0.1px #000;">568</span>
<span style="left:711.40px;top:77.00px;font-size:12.57px;line-height:12.57px;color:#000;-webkit-text-stroke:0.1px #000;">137</span>
<span style="left:601.40px;top:115.00px;font-size:12.57px;line-height:12.57px;color:#000;-webkit-text-stroke:0.1px #000;transform:scaleX(0.9492);">C08</span>
<span style="left:658.52px;top:115.00px;font-size:12.57px;line-height:12.57px;color:#000;-webkit-text-stroke:0.1px #000;">610</span>
<span style="left:711.40px;top:115.00px;font-size:12.57px;line-height:12.57px;color:#000;-webkit-text-stroke:0.1px #000;">134</span>
<span style="left:601.40px;top:153.00px;font-size:12.57px;line-height:12.57px;color:#000;-webkit-text-stroke:0.1px #000;transform:scaleX(0.9492);">C09</span>
<span style="left:658.52px;top:153.00px;font-size:12.57px;line-height:12.57px;color:#000;-webkit-text-stroke:0.1px #000;">452</span>
<span style="left:711.40px;top:153.00px;font-size:12.57px;line-height:12.57px;color:#000;-webkit-text-stroke:0.1px #000;">141</span>
<span style="left:816.20px;top:31.00px;font-size:13.97px;line-height:13.97px;color:#000;font-weight:bold;-webkit-text-stroke:0.07880000000000002px #000;transform:scaleX(1.0242);">CCX4</span>
<span style="left:876.00px;top:32.00px;font-size:12.57px;line-height:12.57px;color:#000;-webkit-text-stroke:0.1px #000;transform:scaleX(0.9609);">42.8°</span>
<span style="left:767.40px;top:77.00px;font-size:12.57px;line-height:12.57px;color:#000;-webkit-text-stroke:0.1px #000;transform:scaleX(0.9492);">C10</span>
<span style="left:824.52px;top:77.00px;font-size:12.57px;line-height:12.57px;color:#000;-webkit-text-stroke:0.1px #000;">693</span>
<span style="left:877.40px;top:77.00px;font-size:12.57px;line-height:12.57px;color:#000;-webkit-text-stroke:0.1px #000;">130</span>
<span style="left:767.40px;top:115.00px;font-size:12.57px;line-height:12.57px;color:#000;-webkit-text-stroke:0.1px #000;transform:scaleX(0.9492);">C11</span>
<span style="left:821.03px;top:115.00px;font-size:12.57px;line-height:12.57px;color:#000;-webkit-text-stroke:0.1px #000;">2229</span>
<span style="left:877.40px;top:115.00px;font-size:12.57px;line-height:12.57px;color:#000;-webkit-text-stroke:0.1px #000;">122</span>
<span style="left:767.40px;top:153.00px;font-size:12.57px;line-height:12.57px;color:#000;-webkit-text-stroke:0.1px #000;transform:scaleX(0.9492);">C12</span>
<span style="left:821.03px;top:153.00px;font-size:12.57px;line-height:12.57px;color:#000;-webkit-text-stroke:0.1px #000;">1825</span>
<span style="left:877.40px;top:153.00px;font-size:12.57px;line-height:12.57px;color:#000;-webkit-text-stroke:0.1px #000;">126</span>
<span style="left:979.80px;top:31.00px;font-size:13.97px;line-height:13.97px;color:#000;font-weight:bold;-webkit-text-stroke:0.07880000000000002px #000;transform:scaleX(1.0269);">CCX5</span>
<span style="left:1145.80px;top:31.00px;font-size:13.97px;line-height:13.97px;color:#000;font-weight:bold;-webkit-text-stroke:0.07880000000000002px #000;transform:scaleX(1.0269);">CCX6</span>
<span style="left:1311.80px;top:31.00px;font-size:13.97px;line-height:13.97px;color:#000;font-weight:bold;-webkit-text-stroke:0.07880000000000002px #000;transform:scaleX(1.0269);">CCX7</span>
<span style="left:1477.80px;top:31.00px;font-size:13.97px;line-height:13.97px;color:#000;font-weight:bold;-webkit-text-stroke:0.07880000000000002px #000;transform:scaleX(1.0269);">CCX8</span>
<span style="left:269.10px;top:247.00px;font-size:13.97px;line-height:13.97px;color:#000;font-weight:bold;-webkit-text-stroke:0.07880000000000002px #000;transform:scaleX(0.9767);">CPU usage (%)</span>
<span style="left:426.50px;top:249.00px;font-size:12.57px;line-height:12.57px;color:#000;-webkit-text-stroke:0.1px #000;transform:scaleX(0.9555);">5.8</span>
<span style="left:490.40px;top:247.00px;font-size:13.97px;line-height:13.97px;color:#000;font-weight:bold;-webkit-text-stroke:0.07880000000000002px #000;transform:scaleX(0.9705);">CPU SVI2 TFN (V)</span>
<span style="left:642.30px;top:249.00px;font-size:12.57px;line-height:12.57px;color:#000;-webkit-text-stroke:0.1px #000;transform:scaleX(0.8394);">1.431</span>
<span style="left:711.10px;top:247.00px;font-size:13.97px;line-height:13.97px;color:#000;font-weight:bold;-webkit-text-stroke:0.07880000000000002px #000;transform:scaleX(0.9808);">CPU VID (V)</span>
<span style="left:862.30px;top:249.00px;font-size:12.57px;line-height:12.57px;color:#000;-webkit-text-stroke:0.1px #000;transform:scaleX(0.9189);">1.388</span>
<span style="left:932.20px;top:247.00px;font-size:13.97px;line-height:13.97px;color:#000;font-weight:bold;-webkit-text-stroke:0.07880000000000002px #000;transform:scaleX(0.9924);">CPU PPT (W)</span>
<span style="left:1087.20px;top:249.00px;font-size:12.57px;line-height:12.57px;color:#000;-webkit-text-stroke:0.1px #000;transform:scaleX(0.8789);">69.1</span>
<span style="left:1153.20px;top:247.00px;font-size:13.97px;line-height:13.97px;color:#000;font-weight:bold;-webkit-text-stroke:0.07880000000000002px #000;transform:scaleX(0.9487);">CPU EDC (A)</span>
<span style="left:1307.20px;top:249.00px;font-size:12.57px;line-height:12.57px;color:#000;-webkit-text-stroke:0.1px #000;transform:scaleX(0.9606);">43.5</span>
<span style="left:1374.10px;top:247.00px;font-size:13.97px;line-height:13.97px;color:#000;font-weight:bold;-webkit-text-stroke:0.07880000000000002px #000;transform:scaleX(0.9716);">CPU TDC (A)</span>
<span style="left:1525.10px;top:249.00px;font-size:12.57px;line-height:12.57px;color:#000;-webkit-text-stroke:0.1px #000;transform:scaleX(0.9729);">24.6</span>
<span style="left:270.30px;top:326.00px;font-size:15.36px;line-height:15.36px;color:#000;font-weight:bold;-webkit-text-stroke:0.1344px #000;transform:scaleX(1.0284);">Settings mode</span>
<span style="left:398.50px;top:329.00px;font-size:11.17px;line-height:11.17px;color:#141c36;font-weight:bold;transform:scaleX(0.9791);">Default</span>
<span style="left:839.20px;top:331.00px;font-size:10.89px;line-height:10.89px;color:#fff;font-weight:bold;transform:scaleX(0.8982);">RESET SETTINGS</span>
<span style="left:265.30px;top:383.00px;font-size:13.41px;line-height:13.41px;color:#000;-webkit-text-stroke:0.1px #000;transform:scaleX(0.9965);">Testing mode</span>
<span style="left:374.40px;top:383.00px;font-size:11.17px;line-height:11.17px;color:#8a8a8a;font-weight:bold;transform:scaleX(0.9744);">AVX Light</span>
<span style="left:265.30px;top:427.00px;font-size:13.41px;line-height:13.41px;color:#000;-webkit-text-stroke:0.1px #000;transform:scaleX(0.9305);">Cycle time (s)</span>
<span style="left:374.40px;top:427.00px;font-size:11.17px;line-height:11.17px;color:#141c36;font-weight:bold;transform:scaleX(0.9289);">360</span>
<span style="left:265.30px;top:471.00px;font-size:13.41px;line-height:13.41px;color:#000;-webkit-text-stroke:0.1px #000;transform:scaleX(0.9450);">CCX delta (MHz)</span>
<span style="left:391.10px;top:471.00px;font-size:11.17px;line-height:11.17px;color:#141c36;font-weight:bold;transform:scaleX(0.9560);">150</span>
<span style="left:264.30px;top:515.00px;font-size:13.41px;line-height:13.41px;color:#000;-webkit-text-stroke:0.1px #000;transform:scaleX(0.9955);">Polling period (ms)</span>
<span style="left:400.40px;top:515.00px;font-size:11.17px;line-height:11.17px;color:#141c36;font-weight:bold;transform:scaleX(0.9506);">500</span>
<span style="left:264.01px;top:582.00px;font-size:13.41px;line-height:13.41px;color:#000;-webkit-text-stroke:0.1px #000;transform:scaleX(0.9881);">Initial frequency smart offset</span>
<span style="left:559.37px;top:582.00px;font-size:13.41px;line-height:13.41px;color:#000;-webkit-text-stroke:0.1px #000;transform:scaleX(0.9253);">Enhance accuracy</span>
<span style="left:788.40px;top:582.00px;font-size:13.41px;line-height:13.41px;color:#000;-webkit-text-stroke:0.1px #000;transform:scaleX(0.9344);">CB20 testing</span>
<span style="left:265.20px;top:620.00px;font-size:13.41px;line-height:13.41px;color:#000;-webkit-text-stroke:0.1px #000;transform:scaleX(0.9890);">Autoload profile with OS</span>
<span style="left:560.30px;top:620.00px;font-size:13.41px;line-height:13.41px;color:#000;-webkit-text-stroke:0.1px #000;transform:scaleX(1.0092);">To tray</span>
<span style="left:788.40px;top:620.00px;font-size:13.41px;line-height:13.41px;color:#000;-webkit-text-stroke:0.1px #000;transform:scaleX(0.9567);">Autoshare stats</span>
<span style="left:278.84px;top:671.00px;font-size:17.32px;line-height:17.32px;color:#fff;font-weight:bold;-webkit-text-stroke:0.21280000000000002px #fff;transform:scaleX(1.0649);">DIAGNOSTIC</span>
<span style="left:308.80px;top:715.00px;font-size:17.88px;line-height:17.88px;color:#fff;font-weight:bold;-webkit-text-stroke:0.23519999999999996px #fff;transform:scaleX(0.9762);">START</span>
<span style="left:471.70px;top:691.00px;font-size:20.25px;line-height:20.25px;color:#fff;font-weight:bold;-webkit-text-stroke:0.3px #fff;transform:scaleX(0.9639);">STOP</span>
<span style="left:624.40px;top:683.00px;font-size:14.25px;line-height:14.25px;color:#fff;font-weight:bold;-webkit-text-stroke:0.09px #fff;transform:scaleX(0.9790);">CHECK</span>
<span style="left:612.40px;top:704.00px;font-size:14.25px;line-height:14.25px;color:#fff;font-weight:bold;-webkit-text-stroke:0.09px #fff;transform:scaleX(1.0265);">STABILITY</span>
<span style="left:771.60px;top:683.00px;font-size:14.25px;line-height:14.25px;color:#fff;font-weight:bold;-webkit-text-stroke:0.09px #fff;">PROFILE</span>
<span style="left:744.80px;top:704.00px;font-size:14.25px;line-height:14.25px;color:#fff;font-weight:bold;-webkit-text-stroke:0.09px #fff;transform:scaleX(1.1029);">MANAGEMENT</span>
<span style="left:984.67px;top:326.00px;font-size:15.64px;line-height:15.64px;color:#000;font-weight:bold;-webkit-text-stroke:0.14560000000000003px #000;transform:scaleX(1.0347);">Log &amp; System Information</span>
<span style="left:987.30px;top:372.00px;font-size:12.15px;line-height:12.15px;color:#000;-webkit-text-stroke:0.1px #000;transform:scaleX(1.0536);">AMD Ryzen 9 3900X 12-Core Processor</span>
<span style="left:987.30px;top:391.00px;font-size:12.15px;line-height:12.15px;color:#000;-webkit-text-stroke:0.1px #000;transform:scaleX(1.0116);">ASRock B550 PG Velocita</span>
<span style="left:991.60px;top:424.00px;font-size:12.99px;line-height:12.99px;color:#000;-webkit-text-stroke:0.1px #000;">***ClockTuner for Ryzen 1.1 beta 7 by 1usmus***</span>
<span style="left:991.60px;top:440.00px;font-size:12.99px;line-height:12.99px;color:#000;-webkit-text-stroke:0.1px #000;transform:scaleX(0.9942);">AMD Ryzen 9 3900X 12-Core Processor (870F10)</span>
<span style="left:991.60px;top:456.00px;font-size:12.99px;line-height:12.99px;color:#000;-webkit-text-stroke:0.1px #000;transform:scaleX(1.0172);">ASRock B550 PG Velocita</span>
<span style="left:990.62px;top:472.00px;font-size:12.99px;line-height:12.99px;color:#000;-webkit-text-stroke:0.1px #000;transform:scaleX(0.9846);">BIOS ver. P1.20 SMU ver. 46.64.00</span>
<span style="left:990.57px;top:488.00px;font-size:12.99px;line-height:12.99px;color:#000;-webkit-text-stroke:0.1px #000;transform:scaleX(1.0281);">DRAM speed 3600 MHz</span>
<span style="left:991.60px;top:504.00px;font-size:12.99px;line-height:12.99px;color:#000;-webkit-text-stroke:0.1px #000;transform:scaleX(0.9623);">10/24/2020 19:01:11</span>
<span style="left:1431.88px;top:326.00px;font-size:15.36px;line-height:15.36px;color:#000;font-weight:bold;-webkit-text-stroke:0.1344px #000;transform:scaleX(1.0198);">Energy Efficiency</span>
<span style="left:1440.60px;top:383.00px;font-size:12.43px;line-height:12.43px;color:#000;-webkit-text-stroke:0.1px #000;transform:scaleX(0.8646);">CPU</span>
<span style="left:1440.60px;top:426.00px;font-size:12.43px;line-height:12.43px;color:#000;-webkit-text-stroke:0.1px #000;transform:scaleX(0.8999);">CCX1</span>
<span style="left:1440.60px;top:469.00px;font-size:12.43px;line-height:12.43px;color:#000;-webkit-text-stroke:0.1px #000;transform:scaleX(0.8999);">CCX2</span>
<span style="left:1440.60px;top:512.00px;font-size:12.43px;line-height:12.43px;color:#000;-webkit-text-stroke:0.1px #000;transform:scaleX(0.8999);">CCX3</span>
<span style="left:1440.60px;top:555.00px;font-size:12.43px;line-height:12.43px;color:#000;-webkit-text-stroke:0.1px #000;transform:scaleX(0.8999);">CCX4</span>
<span style="left:1440.60px;top:598.00px;font-size:12.43px;line-height:12.43px;color:#000;-webkit-text-stroke:0.1px #000;transform:scaleX(0.8999);">CCX5</span>
<span style="left:1440.60px;top:641.00px;font-size:12.43px;line-height:12.43px;color:#000;-webkit-text-stroke:0.1px #000;transform:scaleX(0.8999);">CCX6</span>
<span style="left:1440.60px;top:684.00px;font-size:12.43px;line-height:12.43px;color:#000;-webkit-text-stroke:0.1px #000;transform:scaleX(0.8999);">CCX7</span>
<span style="left:1440.60px;top:727.00px;font-size:12.43px;line-height:12.43px;color:#000;-webkit-text-stroke:0.1px #000;transform:scaleX(0.8999);">CCX8</span>
</body></html>
